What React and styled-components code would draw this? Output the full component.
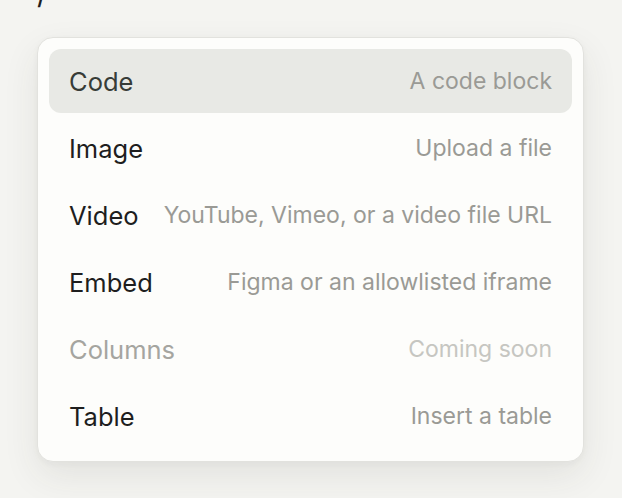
import styled, { createGlobalStyle } from "styled-components";

const GlobalStyle = createGlobalStyle`
  html, body {
    margin: 0;
    padding: 0;
    background: #f4f4f1;
  }
  body {
    font-family: Inter, "Noto Sans", sans-serif;
    -webkit-font-smoothing: antialiased;
  }
`;

const Page = styled.div`
  width: 622px;
  height: 498px;
  padding: 0 38px 0 37px;
  box-sizing: border-box;
  overflow: hidden;
`;

const Slash = styled.div`
  height: 59px;
  margin-top: -22px;
  font-size: 30px;
  line-height: 30px;
  color: #1f1f1f;
`;

const Menu = styled.div`
  display: flex;
  flex-direction: column;
  gap: 3px;
  padding: 11px 11px 13px;
  background: #fdfdfb;
  border: 1px solid #e2e2de;
  border-radius: 16px;
  box-shadow: 0 14px 36px rgba(60, 60, 40, 0.09), 0 2px 6px rgba(60, 60, 40, 0.04);
`;

const Item = styled.div`
  display: flex;
  align-items: center;
  justify-content: space-between;
  height: 64px;
  padding: 0 20px;
  border-radius: 12px;
  background: ${(p) => (p.$active ? "#e8e9e5" : "transparent")};
`;

const Label = styled.span`
  font-size: 25.5px;
  color: ${(p) => (p.$disabled ? "#a5a5a0" : p.$active ? "#373c38" : "#1e1e1e")};
  white-space: nowrap;
`;

const Hint = styled.span`
  font-size: 23px;
  color: ${(p) => (p.$disabled ? "#c6c6c1" : "#9a9a95")};
  white-space: nowrap;
  margin-left: 20px;
`;

const items = [
  { label: "Code", hint: "A code block", active: true },
  { label: "Image", hint: "Upload a file" },
  { label: "Video", hint: "YouTube, Vimeo, or a video file URL" },
  { label: "Embed", hint: "Figma or an allowlisted iframe" },
  { label: "Columns", hint: "Coming soon", disabled: true },
  { label: "Table", hint: "Insert a table" },
];

export default function App() {
  return (
    <>
      <GlobalStyle />
      <Page>
        <Slash>/</Slash>
        <Menu>
          {items.map((it) => (
            <Item key={it.label} $active={it.active}>
              <Label $active={it.active} $disabled={it.disabled}>
                {it.label}
              </Label>
              <Hint $disabled={it.disabled}>{it.hint}</Hint>
            </Item>
          ))}
        </Menu>
      </Page>
    </>
  );
}
